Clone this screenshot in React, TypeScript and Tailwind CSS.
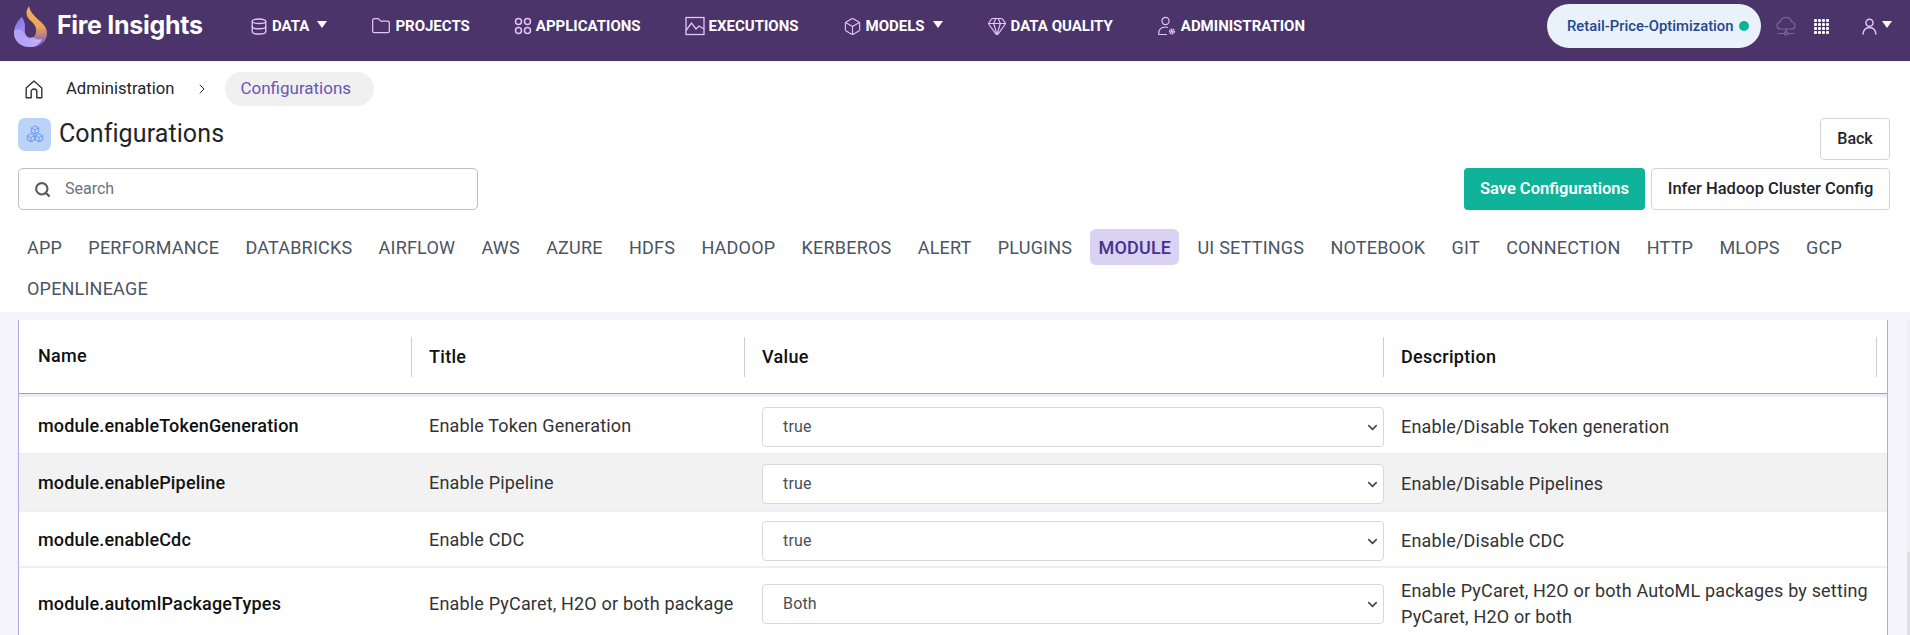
import { Box, ChevronDown, ChevronRight, Database, Folder, Gem, Search } from "lucide-react";

const font = { roboto: "font-['Roboto',sans-serif]" };

const Caret = () => <span className="w-0 h-0 border-x-[5px] border-x-transparent border-t-[7px] border-t-white" />;

const Apps = ({ className }: { className?: string }) => (
  <svg viewBox="0 0 18 18" fill="none" stroke="currentColor" strokeWidth="1.5" className={className}>
    <circle cx="4.5" cy="4.5" r="3" />
    <circle cx="13.5" cy="4.5" r="3" />
    <circle cx="4.5" cy="13.5" r="3" />
    <circle cx="13.5" cy="13.5" r="3" />
  </svg>
);

const Executions = ({ className }: { className?: string }) => (
  <svg viewBox="0 0 20 20" fill="none" stroke="currentColor" strokeWidth="1.3" className={className}>
    <rect x="1" y="1.5" width="18" height="17" />
    <path d="M1 14.5 L6.5 7 L11 13 L14 10 L19 13" />
  </svg>
);

const UserGear = ({ className }: { className?: string }) => (
  <svg viewBox="0 0 20 20" fill="none" stroke="currentColor" strokeWidth="1.2" className={className}>
    <circle cx="8.5" cy="5" r="3.6" />
    <path d="M1.5 18.5 C1.5 14 3.5 11 8.5 11 C9.5 11 10.5 11.2 11 11.5 M1.5 18.5 H10" />
    <circle cx="15" cy="15.5" r="2.2" strokeWidth="1.8" strokeDasharray="1.4 0.6" />
    <circle cx="15" cy="15.5" r="0.6" />
  </svg>
);

const CloudNet = ({ className }: { className?: string }) => (
  <svg viewBox="0 0 20 20" fill="none" stroke="currentColor" strokeWidth="1.2" className={className}>
    <path d="M5 13 C2.5 13 1 11.4 1 9.4 C1 7.5 2.4 6.2 4.2 6 C4.8 3.3 7 1.5 10 1.5 C13 1.5 15.2 3.3 15.8 6 C17.6 6.2 19 7.5 19 9.4 C19 11.4 17.5 13 15 13 Z" />
    <path d="M10 13 V16.5 M1.5 17.5 H8.4 M11.6 17.5 H18.5" />
    <circle cx="10" cy="17.5" r="1.6" />
  </svg>
);

const UserIcon = ({ className }: { className?: string }) => (
  <svg viewBox="0 0 16 18" fill="none" stroke="currentColor" strokeWidth="1.6" className={className}>
    <circle cx="8" cy="5" r="3.8" />
    <path d="M1 17.5 C1.5 12.5 4 10 8 10 C12 10 14.5 12.5 15 17.5" />
  </svg>
);

const Home = ({ className }: { className?: string }) => (
  <svg viewBox="0 0 18 19" fill="none" stroke="currentColor" strokeWidth="1.4" strokeLinejoin="round" className={className}>
    <path d="M1.2 8 L9 1 L16.8 8 V17.8 H11.8 V11.5 C11.8 10 10.6 9 9 9 C7.4 9 6.2 10 6.2 11.5 V17.8 H1.2 Z" />
  </svg>
);

const Cubes = ({ className }: { className?: string }) => (
  <svg viewBox="0 0 20 20" fill="none" stroke="currentColor" strokeWidth="1.2" strokeLinejoin="round" className={className}>
    <path d="M10 1 L14 3.2 V7.8 L10 10 L6 7.8 V3.2 Z M6 3.2 L10 5.4 L14 3.2 M10 5.4 V10" />
    <path d="M5.5 9.6 L9.5 11.8 V16.4 L5.5 18.6 L1.5 16.4 V11.8 Z M1.5 11.8 L5.5 14 L9.5 11.8 M5.5 14 V18.6" />
    <path d="M14.5 9.6 L18.5 11.8 V16.4 L14.5 18.6 L10.5 16.4 V11.8 Z M10.5 11.8 L14.5 14 L18.5 11.8 M14.5 14 V18.6" />
  </svg>
);

const Logo = () => (
  <svg viewBox="0 0 33 41" className="w-[33px] h-[41px]">
    <defs>
      <linearGradient id="flame" x1="0" y1="0" x2="0" y2="1">
        <stop offset="0" stopColor="#f7ae52" />
        <stop offset="0.5" stopColor="#eda35c" />
        <stop offset="1" stopColor="#6d4fd0" />
      </linearGradient>
      <linearGradient id="left" x1="0" y1="0" x2="1" y2="1">
        <stop offset="0" stopColor="#7f6be8" />
        <stop offset="1" stopColor="#cfc4fb" />
      </linearGradient>
    </defs>
    <path d="M15 0 C11 6 12 11 17 15 C23 20 24 27 19 32 C18 38 12 41 18 41 C27 41 33 35 33 27 C33 16 17 12 15 0 Z" fill="url(#flame)" />
    <path d="M8 11 C3 15 0 21 0 27 C0 35 7 41 16 41 C22 41 26 38 28 33 C24 34 21 33 19 31 C16 33 12 31 11 27 C10 22 13 20 8 11 Z" fill="url(#left)" />
    <path d="M0 24 C5 22 10 25 12 30 C14 35 20 38 27 35 C24 40 20 41 16 41 C7 41 0 35 0 27 Z" fill="#b6a7f6" opacity="0.8" />
  </svg>
);

const navItems = [
  { label: "DATA", icon: <Database className="w-[18px] h-[19px]" strokeWidth={1.8} />, caret: true },
  { label: "PROJECTS", icon: <Folder className="w-5 h-5" strokeWidth={1.5} /> },
  { label: "APPLICATIONS", icon: <Apps className="w-[18px] h-[18px]" /> },
  { label: "EXECUTIONS", icon: <Executions className="w-5 h-5" /> },
  { label: "MODELS", icon: <Box className="w-[19px] h-[19px]" strokeWidth={1.4} />, caret: true },
  { label: "DATA QUALITY", icon: <Gem className="w-5 h-5" strokeWidth={1.4} /> },
  { label: "ADMINISTRATION", icon: <UserGear className="w-5 h-5" /> },
];

const tabs = [
  "APP", "PERFORMANCE", "DATABRICKS", "AIRFLOW", "AWS", "AZURE", "HDFS", "HADOOP", "KERBEROS", "ALERT",
  "PLUGINS", "MODULE", "UI SETTINGS", "NOTEBOOK", "GIT", "CONNECTION", "HTTP", "MLOPS", "GCP", "OPENLINEAGE",
];

const rows = [
  { name: "module.enableTokenGeneration", title: "Enable Token Generation", value: "true", desc: "Enable/Disable Token generation", h: "h-[58px] pt-[3px]" },
  { name: "module.enablePipeline", title: "Enable Pipeline", value: "true", desc: "Enable/Disable Pipelines", h: "h-[57px] pt-[2px] bg-[#f2f2f2]" },
  { name: "module.enableCdc", title: "Enable CDC", value: "true", desc: "Enable/Disable CDC", h: "h-[56px] pt-[3px]" },
  { name: "module.automlPackageTypes", title: "Enable PyCaret, H2O or both package", value: "Both", desc: "Enable PyCaret, H2O or both AutoML packages by setting PyCaret, H2O or both", h: "h-[71px] pt-[3px]" },
];

const grid = "grid grid-cols-[393px_333px_639px_503px]";

export default function App() {
  return (
    <div className={`w-[1910px] h-[635px] overflow-hidden bg-white text-[#212529] ${font.roboto}`}>
      <nav className="h-[62px] bg-[#4a3469] border-b border-[#f6f1fd] pb-[9px] pl-[14px] pr-[18px] flex items-center">
        <div className="w-[236px] flex items-center gap-[10px]">
          <Logo />
          <span className="text-white text-[25px] font-bold font-['Inter',sans-serif] tracking-[-0.3px]">Fire Insights</span>
        </div>
        <div className="flex items-center gap-[44px]">
          {navItems.map((item) => (
            <div key={item.label} className="flex items-center gap-[4px]">
              <span className="text-[#e6c4f6]">{item.icon}</span>
              <span className="text-white text-[15px] font-bold">{item.label}</span>
              {item.caret && <span className="ml-[4px] mb-[4px] flex"><Caret /></span>}
            </div>
          ))}
        </div>
        <div className="ml-auto flex items-center">
          <div className="h-[44px] w-[214px] rounded-full bg-[#e9f1fb] flex items-center pl-[20px] gap-[6px]">
            <span className="text-[14.8px] font-medium text-[#24478f]">Retail-Price-Optimization</span>
            <span className="w-[10px] h-[10px] rounded-full bg-[#0fb39a]" />
          </div>
          <CloudNet className="ml-[15px] w-[20px] h-[20px] text-[#7b6a96]" />
          <div className="ml-[18px] grid grid-cols-4 gap-[1px] w-[15px] h-[15px]">
            {Array.from({ length: 16 }).map((_, i) => (
              <span key={i} className="w-[3px] h-[3px] bg-white rounded-[1px]" />
            ))}
          </div>
          <UserIcon className="ml-[33px] w-[15px] h-[17px] text-[#e6c4f6]" />
          <span className="ml-[5px] mb-[3px] flex"><Caret /></span>
        </div>
      </nav>

      <div className="h-[44px] pl-[25px] pt-[10px] flex items-center">
        <Home className="w-[18px] h-[19px] text-[#333]" />
        <span className="ml-[23px] text-[16.6px] text-[#212529]">Administration</span>
        <ChevronRight className="ml-[20px] w-[16px] h-[16px] text-[#333]" strokeWidth={1.5} />
        <span className="ml-[15px] h-[34px] pl-[15px] pr-[23px] rounded-full bg-[#f0f0f0] text-[17px] text-[#6a55b8] flex items-center">Configurations</span>
      </div>

      <div className="flex justify-between pl-[18px] pr-[20px] pt-[12px]">
        <div>
          <div className="flex items-center gap-[8px] h-[32px]">
            <span className="w-[33px] h-[33px] rounded-[7px] bg-[#bcd3f8] flex items-center justify-center">
              <Cubes className="w-[18px] h-[18px] text-[#6f9ff0]" />
            </span>
            <span className="text-[25px] tracking-[0.1px] text-[#212529]">Configurations</span>
          </div>
          <div className="mt-[18px] w-[460px] h-[42px] border border-[#bdbdbd] rounded-[5px] flex items-center pl-[15px] gap-[14px]">
            <Search className="w-[17px] h-[17px] text-[#5a5a5a]" strokeWidth={3} />
            <span className="text-[16px] text-[#6b7280]">Search</span>
          </div>
        </div>
        <div className="flex flex-col items-end gap-[8px]">
          <button className="w-[70px] h-[42px] border border-[#d1d5db] rounded-[4px] text-[16px] font-medium text-[#212529]">Back</button>
          <div className="flex gap-[6px]">
            <button className="w-[181px] h-[42px] rounded-[4px] bg-[#0fb39a] text-white text-[16.5px] font-semibold">Save Configurations</button>
            <button className="w-[239px] h-[42px] border border-[#d1d5db] rounded-[4px] text-[16.5px] font-medium text-[#212529]">Infer Hadoop Cluster Config</button>
          </div>
        </div>
      </div>

      <div className="mt-[19px] pl-[19px] flex flex-wrap gap-x-[10.3px] gap-y-[5px] w-[1880px]">
        {tabs.map((tab) => (
          <span
            key={tab}
            className={`h-[36px] px-[8px] rounded-[6px] flex items-center text-[18px] tracking-[0.2px] ${
              tab === "MODULE" ? "bg-[#d9d2f3] text-[#4a2f8f] font-medium" : "text-[#4b5563]"
            }`}
          >
            {tab}
          </span>
        ))}
      </div>

      <div className="mt-[6px] h-[400px] bg-[#f5f4fd] pt-[8px] pl-[18px] flex">
        <div className="w-[1870px] border-x border-[#b9a5e8] bg-white">
          <div className={`${grid} h-[77px] border-b-[3px] border-[#edecf6] relative`}>
            {["Name", "Title", "Value", "Description"].map((h, i) => (
              <div key={h} className="h-[74px] border-b border-[#9ca3af] pt-[17px]">
                <div className={`h-[40px] border-r border-[#cfcfcf] flex items-center font-medium text-[18px] tracking-[0.3px] text-[#111] ${i === 0 ? "pl-[19px] pb-[4px]" : "pl-[17px] pb-[2px]"} ${i === 3 ? "mr-[10px]" : ""}`}>
                  {h}
                </div>
              </div>
            ))}
          </div>
          {rows.map((row) => (
            <div key={row.name} className={`${grid} ${row.h} border-b-2 border-[#efeef8] items-center text-[18px] tracking-[0.17px]`}>
              <div className="pl-[19px] pb-[2px] font-medium text-[#111]">{row.name}</div>
              <div className="pl-[17px] pb-[2px] text-[#333]">{row.title}</div>
              <div className="pl-[17px] relative">
                <select
                  defaultValue={row.value}
                  className="w-full h-[40px] appearance-none bg-white border border-[#d8d8d8] rounded-[4px] pl-[20px] text-[16px] text-[#495057]"
                >
                  <option>{row.value}</option>
                </select>
                <ChevronDown className="absolute right-[4px] top-[13px] w-[15px] h-[15px] text-[#444] pointer-events-none" strokeWidth={2.5} />
              </div>
              <div className="pl-[17px] pr-[5px] leading-[26px] text-[#333]">{row.desc}</div>
            </div>
          ))}
        </div>
        <div className="ml-auto w-[3px] flex flex-col">
          <div className="h-[232px] bg-[#efeef5]" />
          <div className="flex-1 bg-[#e0e0e0]" />
        </div>
      </div>
    </div>
  );
}
